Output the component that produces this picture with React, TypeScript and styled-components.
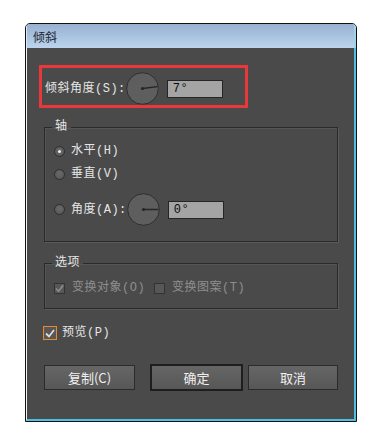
import styled, { createGlobalStyle } from "styled-components";

const GlobalStyle = createGlobalStyle`
  html, body {
    margin: 0;
    padding: 0;
    background: #ffffff;
  }
  body {
    font-family: "Liberation Mono", "Noto Sans CJK SC", monospace;
  }
`;

const Page = styled.div`
  width: 378px;
  height: 437px;
  padding: 23px 0 0 25px;
  box-sizing: border-box;
`;

const Window = styled.div`
  width: 332px;
  height: 399px;
  box-sizing: border-box;
  border: 1px solid #121212;
  border-radius: 5px 5px 0 0;
  display: flex;
  flex-direction: column;
  overflow: hidden;
  background: #bcd4ec;
`;

const TitleBar = styled.div`
  height: 24px;
  display: flex;
  align-items: center;
  padding-left: 6px;
  background: linear-gradient(#96b1d1, #bcd4ec);
  border-left: 1px solid #dce8f5;
  border-right: 2px solid #9fd3ec;
  font-family: "Noto Sans CJK SC", sans-serif;
  font-size: 12px;
  color: #1c2330;
`;

const Frame = styled.div`
  flex: 1;
  display: flex;
  border-left: 1px solid #f4f4f4;
  border-right: 2px solid #4cc0e4;
  border-bottom: 2px solid #4cc0e4;
`;

const Body = styled.div`
  flex: 1;
  background: #4a4a4a;
  display: flex;
  flex-direction: column;
  padding: 17px 16px 0 12px;
  font-size: 12px;
  letter-spacing: 0.5px;
  color: #e6e6e6;
`;

const Highlight = styled.div`
  width: 209px;
  height: 43px;
  box-sizing: border-box;
  border: 3px solid #e8383a;
  display: flex;
  align-items: center;
  padding: 4px 0 0 3px;
`;

const Label = styled.span<{ $muted?: boolean }>`
  white-space: nowrap;
  line-height: 16px;
  color: ${({ $muted }) => ($muted ? "#8e8e8e" : "#e6e6e6")};
`;

const DialWrap = styled.svg`
  flex: none;
  width: 33px;
  height: 33px;
`;

const ValueBox = styled.div`
  width: 56px;
  height: 18px;
  box-sizing: border-box;
  margin-left: 8px;
  border: 1px solid #252525;
  background: #a4a4a4;
  color: #0c0c0c;
  display: flex;
  align-items: center;
  padding-left: 5px;
  font-size: 12px;
`;

const Group = styled.fieldset<{ $top: number; $pad: string }>`
  margin: ${({ $top }) => $top}px 0 0 5px;
  padding: ${({ $pad }) => $pad};
  border: 1px solid #2a2a2a;
  box-shadow: 1px 1px 0 #5a5a5a, inset 1px 1px 0 #555555;
  min-width: 0;
  width: 294px;
  box-sizing: border-box;
  display: flex;
  flex-direction: column;
`;

const Legend = styled.legend`
  margin-left: -2px;
  padding: 0 3px;
  line-height: 14px;
  font-size: 12px;
  color: #e6e6e6;
`;

const OptionRow = styled.div<{ $top: number }>`
  display: flex;
  align-items: center;
  margin-top: ${({ $top }) => $top}px;
`;

const Radio = styled.span<{ $on?: boolean }>`
  flex: none;
  width: 11px;
  height: 11px;
  box-sizing: border-box;
  border-radius: 50%;
  border: 1px solid #2e2e2e;
  background: radial-gradient(circle at 50% 40%, #6a6a6a, #535353);
  margin-right: 6px;
  display: flex;
  align-items: center;
  justify-content: center;
  &::after {
    content: "";
    width: 3px;
    height: 3px;
    border-radius: 50%;
    background: ${({ $on }) => ($on ? "#f0f0f0" : "transparent")};
  }
`;

const Check = styled.span<{ $size: number; $accent?: string; $gap: number; $left?: number }>`
  flex: none;
  width: ${({ $size }) => $size}px;
  height: ${({ $size }) => $size}px;
  box-sizing: border-box;
  border: 1px solid ${({ $accent }) => $accent || "#333333"};
  background: #575757;
  margin-left: ${({ $left }) => $left || 0}px;
  margin-right: ${({ $gap }) => $gap}px;
  display: flex;
  align-items: center;
  justify-content: center;
`;

const PreviewRow = styled.div`
  display: flex;
  align-items: center;
  margin: 16px 0 0 4px;
`;

const ButtonRow = styled.div`
  display: flex;
  align-items: center;
  margin: 23px 0 0 5px;
`;

const Button = styled.div<{ $w: number; $primary?: boolean; $left: number }>`
  width: ${({ $w }) => $w}px;
  height: ${({ $primary }) => ($primary ? 27 : 25)}px;
  box-sizing: border-box;
  margin-left: ${({ $left }) => $left}px;
  border: ${({ $primary }) => ($primary ? 2 : 1)}px solid
    ${({ $primary }) => ($primary ? "#1e1e1e" : "#2b2b2b")};
  background: linear-gradient(#666666, #575757);
  display: flex;
  align-items: center;
  justify-content: center;
  font-family: "Noto Sans CJK SC", sans-serif;
  font-size: 13px;
  letter-spacing: 0;
  color: #f0f0f0;
`;

const Dial = ({ angle }: { angle: number }) => {
  const r = (angle * Math.PI) / 180;
  const x2 = 16.5 + 15 * Math.cos(r);
  const y2 = 16.5 - 15 * Math.sin(r);
  return (
    <DialWrap viewBox="0 0 33 33">
      <circle cx="16.5" cy="16.5" r="15.8" fill="#5e5e5e" stroke="#2f2f2f" strokeWidth="1" />
      <line x1="16.5" y1="16.5" x2={x2} y2={y2} stroke="#262626" strokeWidth="1.4" />
      <circle cx="16.5" cy="16.5" r="1.6" fill="#262626" />
    </DialWrap>
  );
};

const Tick = ({ color }: { color: string }) => (
  <svg width="10" height="9" viewBox="0 0 10 9">
    <path d="M1 4.5 L4 7.5 L9 1" fill="none" stroke={color} strokeWidth="1.8" />
  </svg>
);

export default function App() {
  return (
    <>
      <GlobalStyle />
      <Page>
        <Window>
          <TitleBar>倾斜</TitleBar>
          <Frame>
            <Body>
              <Highlight>
                <Label>倾斜角度(S):</Label>
                <Dial angle={7} />
                <ValueBox>7°</ValueBox>
              </Highlight>

              <Group $top={12} $pad="0 0 15px 9px">
                <Legend>轴</Legend>
                <OptionRow $top={9}>
                  <Radio $on />
                  <Label>水平(H)</Label>
                </OptionRow>
                <OptionRow $top={7}>
                  <Radio />
                  <Label>垂直(V)</Label>
                </OptionRow>
                <OptionRow $top={11}>
                  <Radio />
                  <Label>角度(A):</Label>
                  <Dial angle={0} />
                  <ValueBox>0°</ValueBox>
                </OptionRow>
              </Group>

              <Group $top={14} $pad="0 0 12px 9px">
                <Legend>选项</Legend>
                <OptionRow $top={10}>
                  <Check $size={11} $gap={7}>
                    <Tick color="#8c8c8c" />
                  </Check>
                  <Label $muted>变换对象(O)</Label>
                  <Check $size={11} $gap={7} $left={9} />
                  <Label $muted>变换图案(T)</Label>
                </OptionRow>
              </Group>

              <PreviewRow>
                <Check $size={14} $accent="#e88a2c" $gap={5}>
                  <Tick color="#dcdcdc" />
                </Check>
                <Label>预览(P)</Label>
              </PreviewRow>

              <ButtonRow>
                <Button $w={91} $left={0}>复制(C)</Button>
                <Button $w={93} $left={15} $primary>
                  确定
                </Button>
                <Button $w={90} $left={5}>取消</Button>
              </ButtonRow>
            </Body>
          </Frame>
        </Window>
      </Page>
    </>
  );
}
